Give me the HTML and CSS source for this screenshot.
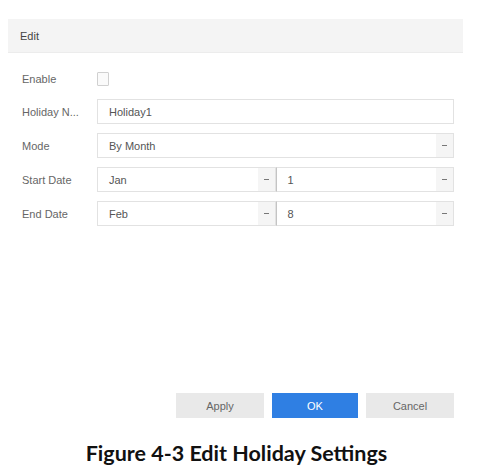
FILE: index.html
```html
<!DOCTYPE html>
<html>
<head>
<meta charset="utf-8">
<link rel="stylesheet" href="styles.css">
</head>
<body>
<div class="dialog">
  <div class="header">Edit</div>
  <div class="form">
    <div class="row">
      <div class="label">Enable</div>
      <div class="check"></div>
    </div>
    <div class="row">
      <div class="label">Holiday N...</div>
      <div class="input">Holiday1</div>
    </div>
    <div class="row">
      <div class="label">Mode</div>
      <div class="select"><span class="val">By Month</span><span class="arrow"><i></i></span></div>
    </div>
    <div class="row">
      <div class="label">Start Date</div>
      <div class="pair">
        <div class="select"><span class="val">Jan</span><span class="arrow"><i></i></span></div>
        <div class="select second"><span class="val">1</span><span class="arrow"><i></i></span></div>
      </div>
    </div>
    <div class="row">
      <div class="label">End Date</div>
      <div class="pair">
        <div class="select"><span class="val">Feb</span><span class="arrow"><i></i></span></div>
        <div class="select second"><span class="val">8</span><span class="arrow"><i></i></span></div>
      </div>
    </div>
  </div>
  <div class="buttons">
    <div class="btn">Apply</div>
    <div class="btn primary">OK</div>
    <div class="btn">Cancel</div>
  </div>
</div>
<div class="caption">Figure 4-3 Edit Holiday Settings</div>
</body>
</html>
```
FILE: styles.css
```css
html, body {
  margin: 0;
  padding: 0;
  background: #fff;
}
body {
  font-family: "Liberation Sans", Arial, sans-serif;
  width: 483px;
  height: 473px;
  overflow: hidden;
}
.dialog {
  padding: 19px 20px 0 8px;
}
.header {
  height: 34px;
  background: #f4f4f4;
  border-bottom: 1px solid #ececec;
  box-sizing: border-box;
  font-size: 11px;
  color: #444;
  padding-left: 12px;
  display: flex;
  align-items: center;
}
.form {
  padding-top: 19px;
  display: flex;
  flex-direction: column;
  gap: 9px;
  padding-right: 9px;
}
.row {
  display: flex;
  align-items: center;
  min-height: 25px;
}
.row:first-child {
  min-height: 14px;
  margin-bottom: 4px;
}
.label {
  width: 89px;
  padding-left: 14px;
  box-sizing: border-box;
  font-size: 11px;
  color: #666;
  white-space: nowrap;
}
.check {
  width: 10px;
  height: 12px;
  border: 1px solid #d0d0d0;
  border-radius: 1px;
  background: #fafafa;
}
.input, .select {
  flex: 1;
  height: 25px;
  border: 1px solid #e2e2e2;
  box-sizing: border-box;
  display: flex;
  align-items: center;
  font-size: 11px;
  color: #555;
  background: #fff;
}
.input {
  padding-left: 11px;
}
.val {
  flex: 1;
  padding-left: 11px;
}
.arrow {
  width: 17px;
  align-self: stretch;
  background: #f5f5f5;
  display: flex;
  align-items: center;
  justify-content: center;
}
.arrow i {
  display: block;
  width: 5px;
  height: 1px;
  background: #777;
}
.pair {
  flex: 1;
  display: flex;
}
.select.second {
  border-left: 1px solid #c4c4c4;
}
.buttons {
  display: flex;
  justify-content: flex-end;
  gap: 8px;
  margin-top: 167px;
  padding-right: 9px;
}
.btn {
  width: 88px;
  height: 25px;
  background: #e9e9e9;
  color: #666;
  font-size: 11px;
  display: flex;
  align-items: center;
  justify-content: center;
}
.btn.primary {
  width: 86px;
  background: #2f7fe3;
  color: #fff;
}
.caption {
  margin-top: 22px;
  text-align: center;
  font-family: Lato, "Open Sans", sans-serif;
  font-weight: bold;
  font-size: 21.5px;
  line-height: 26px;
  color: #111;
  padding-right: 10px;
}
```
